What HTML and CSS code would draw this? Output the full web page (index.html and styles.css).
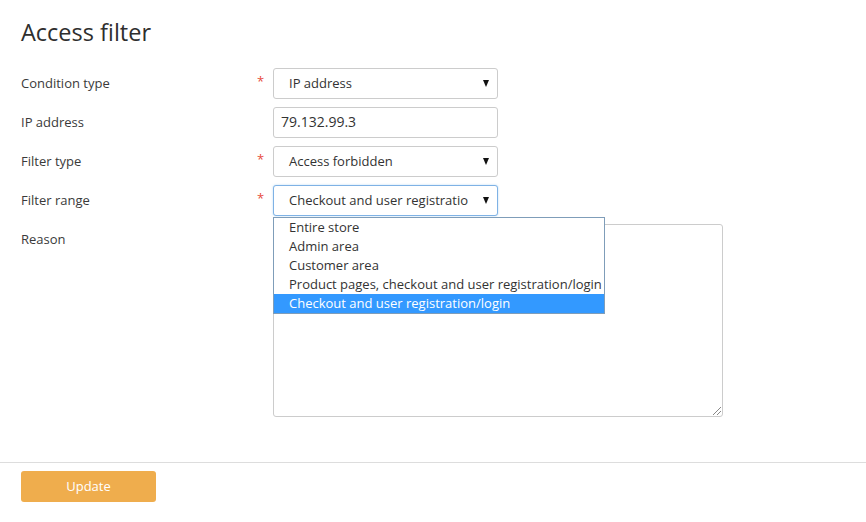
FILE: index.html
```html
<!DOCTYPE html>
<html>
<head>
<meta charset="utf-8">
<link rel="stylesheet" href="styles.css">
</head>
<body>
<div class="page">
  <h1 class="title">Access filter</h1>
  <div class="form">
    <div class="row">
      <div class="label">Condition type</div>
      <div class="req">*</div>
      <div class="select"><span class="val">IP address</span><span class="arrow"></span></div>
    </div>
    <div class="row">
      <div class="label">IP address</div>
      <div class="req"></div>
      <div class="input"><span class="val">79.132.99.3</span></div>
    </div>
    <div class="row">
      <div class="label">Filter type</div>
      <div class="req">*</div>
      <div class="select"><span class="val">Access forbidden</span><span class="arrow"></span></div>
    </div>
    <div class="row">
      <div class="label">Filter range</div>
      <div class="req">*</div>
      <div class="field-wrap">
        <div class="select focus"><span class="val">Checkout and user registratio</span><span class="arrow"></span></div>
        <ul class="dropdown">
          <li>Entire store</li>
          <li>Admin area</li>
          <li>Customer area</li>
          <li>Product pages, checkout and user registration/login</li>
          <li class="sel">Checkout and user registration/login</li>
        </ul>
      </div>
    </div>
    <div class="row tall">
      <div class="label">Reason</div>
      <div class="req"></div>
      <div class="textarea"><span class="grip"></span></div>
    </div>
  </div>
</div>
<div class="footer">
  <button class="btn">Update</button>
</div>
</body>
</html>
```
FILE: styles.css
```css
* { box-sizing: border-box; }
body {
  margin: 0;
  font-family: "Open Sans", "Noto Sans", sans-serif;
  color: #333;
  background: #fff;
}
.page { padding: 0 21px; }
.title {
  margin: 0;
  padding-top: 16px;
  font-size: 23.5px;
  font-weight: 400;
  line-height: 32px;
  color: #2e2e2e;
}
.form {
  margin-top: 20px;
  display: flex;
  flex-direction: column;
  gap: 8px;
}
.row {
  display: grid;
  grid-template-columns: 236px 16px auto;
  align-items: center;
  height: 31px;
  font-size: 13px;
}
.row.tall {
  height: 193px;
  align-items: start;
}
.row.tall .label { padding-top: 5px; padding-bottom: 0; }
.label { line-height: 20px; padding-bottom: 2px; color: #3a3a3a; }
.req {
  color: #e74c3c;
  font-size: 13px;
  line-height: 13px;
  margin-top: -4px;
}
.field-wrap { position: relative; width: 225px; }
.select, .input {
  width: 225px;
  height: 31px;
  border: 1px solid #ccc;
  border-radius: 3px;
  display: flex;
  align-items: center;
  font-size: 13px;
  color: #333;
  background: #fff;
}
.val { padding-bottom: 2px; white-space: nowrap; }
.select { padding: 0 8px 0 15px; justify-content: space-between; }
.select.focus {
  border-color: #7fb2e5;
  box-shadow: 0 0 2px rgba(102,175,233,0.5);
}
.input { padding: 0 7px; font-size: 14px; }
.arrow {
  width: 0; height: 0;
  border-left: 3.5px solid transparent;
  border-right: 3.5px solid transparent;
  border-top: 7px solid #111;
  margin-top: -1px;
}
.dropdown {
  position: absolute;
  left: 0;
  top: 32px;
  margin: 0;
  padding: 0;
  list-style: none;
  width: 332px;
  border: 1px solid #7f9db9;
  background: #fff;
  z-index: 2;
}
.dropdown li {
  height: 19px;
  line-height: 18px;
  padding-left: 15px;
  font-size: 13px;
  color: #333;
  white-space: nowrap;
}
.dropdown li.sel { background: #3399ff; color: #fff; }
.textarea {
  position: relative;
  width: 450px;
  height: 193px;
  border: 1px solid #ccc;
  border-radius: 3px;
}
.grip {
  position: absolute;
  right: 1px;
  bottom: 1px;
  width: 8px;
  height: 8px;
  background: linear-gradient(135deg, transparent 45%, #888 45%, #888 52%, transparent 52%, transparent 70%, #888 70%, #888 77%, transparent 77%);
}
.footer {
  margin-top: 45px;
  border-top: 1px solid #ddd;
  padding: 8px 21px 0;
}
.btn {
  width: 135px;
  height: 31px;
  border: 0;
  border-radius: 3px;
  background: #efad4d;
  color: #fff;
  font-family: "Open Sans", sans-serif;
  font-size: 13px;
  padding-bottom: 2px;
  cursor: pointer;
}
```
